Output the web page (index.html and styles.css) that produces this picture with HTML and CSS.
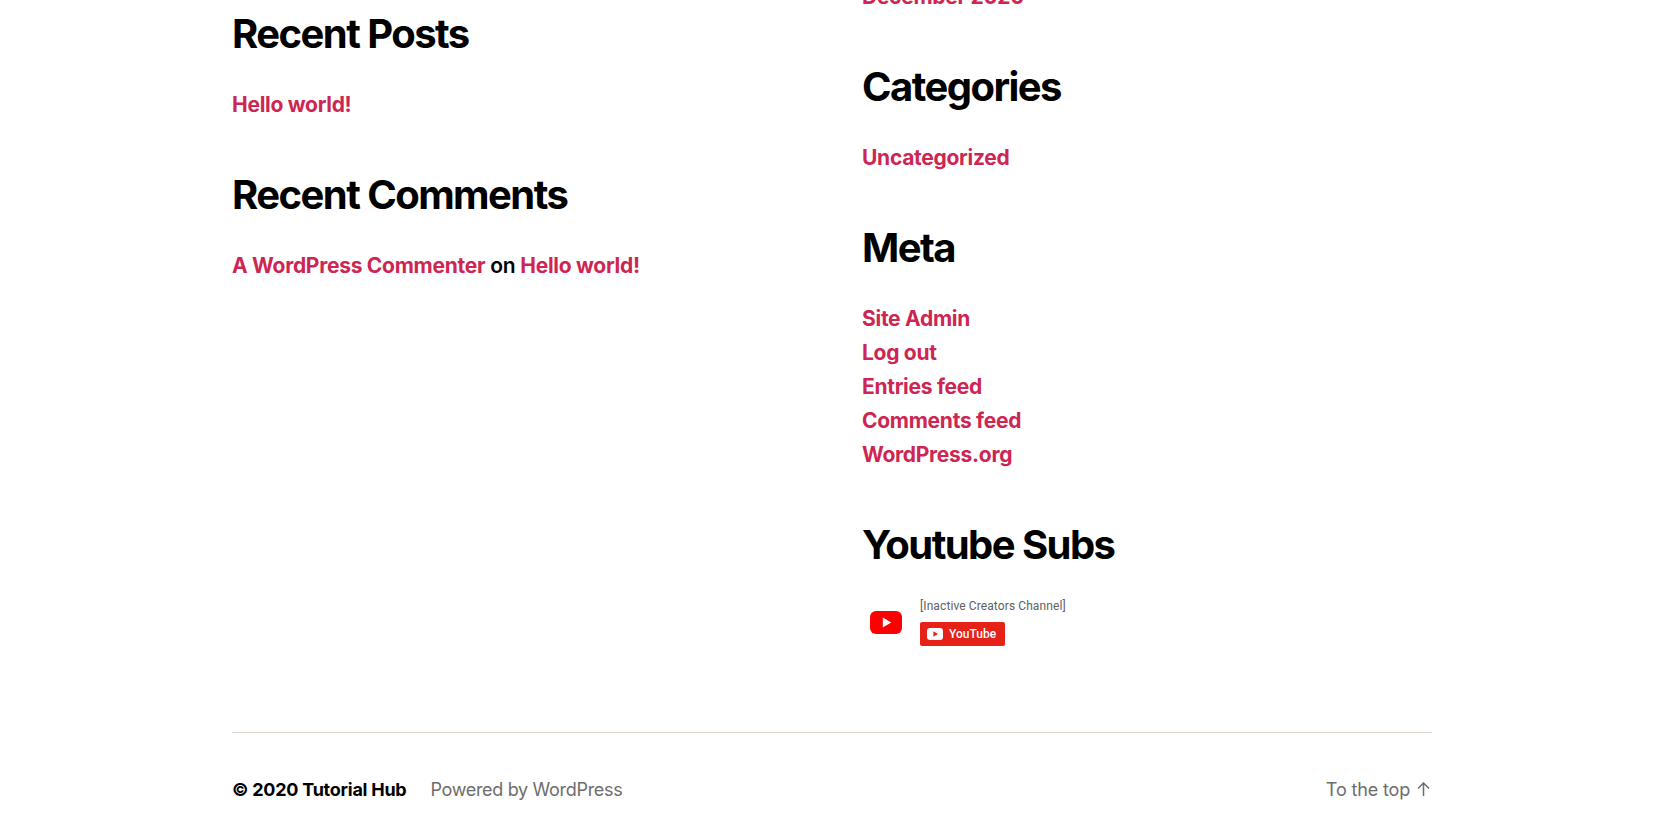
FILE: index.html
```html
<!DOCTYPE html>
<html>
  <head>
    <meta http-equiv="Content-Type" content="text/html; charset=UTF-8" />
    <meta name="viewport" content="width=device-width, initial-scale=1" />
    <title>Tutorial Hub</title>
    <link rel="stylesheet" href="styles.css">
  </head>
  <body>
    <div class="footer-inner">
      <div class="widgets">
        <div class="widget-col">
          <div class="widget">
            <h2 class="widget-title">Recent Posts</h2>
            <ul class="widget-list">
              <li><a href="#">Hello world!</a></li>
            </ul>
          </div>
          <div class="widget">
            <h2 class="widget-title">Recent Comments</h2>
            <ul class="widget-list">
              <li><a href="#">A WordPress Commenter</a> on <a href="#">Hello world!</a></li>
            </ul>
          </div>
        </div>
        <div class="widget-col widget-col-right">
          <div class="widget">
            <ul class="widget-list">
              <li><a href="#">December 2020</a></li>
            </ul>
          </div>
          <div class="widget">
            <h2 class="widget-title">Categories</h2>
            <ul class="widget-list">
              <li><a href="#">Uncategorized</a></li>
            </ul>
          </div>
          <div class="widget">
            <h2 class="widget-title">Meta</h2>
            <ul class="widget-list">
              <li><a href="#">Site Admin</a></li>
              <li><a href="#">Log out</a></li>
              <li><a href="#">Entries feed</a></li>
              <li><a href="#">Comments feed</a></li>
              <li><a href="#">WordPress.org</a></li>
            </ul>
          </div>
          <div class="widget">
            <h2 class="widget-title">Youtube Subs</h2>
            <div class="yt-box">
              <svg class="yt-logo" viewBox="0 0 32 23" width="32" height="23">
                <rect width="32" height="23" rx="6" fill="#f00" />
                <polygon points="12.8,6.6 12.8,16.4 21.2,11.5" fill="#fff" />
              </svg>
              <div class="yt-info">
                <div class="yt-name">[Inactive Creators Channel]</div>
                <a class="yt-button" href="#">
                  <svg viewBox="0 0 16 12" width="16" height="12">
                    <rect width="16" height="12" rx="3" fill="#fff" />
                    <polygon points="6.4,3.2 6.4,8.8 11,6" fill="#e62117" />
                  </svg>
                  YouTube
                </a>
              </div>
            </div>
          </div>
        </div>
      </div>
      <div class="credits">
        <div class="credits-left">
          <span class="copyright">© 2020 <a href="#">Tutorial Hub</a></span>
          <a class="powered" href="#">Powered by WordPress</a>
        </div>
        <a class="to-top" href="#">To the top
          <svg class="arrow" viewBox="0 0 13 14" width="13" height="14">
            <path d="M6.5 14V1M1 6.5L6.5 1L12 6.5" fill="none" stroke="#6d6d6d" stroke-width="1.5" />
          </svg>
        </a>
      </div>
    </div>
  </body>
</html>
```

FILE: styles.css
```css
html, body {
  height: 840px;
  overflow: hidden;
}
body {
  font-family: 'Inter', sans-serif;
  background-color: #ffffff;
  color: #000000;
  margin: 0;
  padding: 0;
}
.footer-inner {
  width: 1200px;
  margin-left: 232px;
}
.widgets {
  display: flex;
  gap: 60px;
  height: 732px;
  border-bottom: 1px solid #dcd7ca;
}
.widget-col {
  width: 570px;
  padding-top: 9px;
}
.widget-col-right {
  margin-top: -29px;
}
.widget {
  margin-bottom: 48px;
}
.widget-title {
  font-size: 40px;
  font-weight: 700;
  line-height: 50px;
  letter-spacing: -1.55px;
  margin: 0 0 29px 0;
}
.widget-list {
  list-style: none;
  margin: 0;
  padding: 0;
  font-size: 21px;
  font-weight: 600;
  line-height: 34px;
  letter-spacing: -0.28px;
}
.widget-list a {
  color: #cd2653;
  font-weight: 700;
  text-decoration: none;
}
.yt-box {
  display: flex;
  align-items: center;
  gap: 18px;
  margin-top: -1px;
  padding: 0 0 0 8px;
}
.yt-name {
  font-family: 'Roboto', sans-serif;
  font-size: 12px;
  line-height: 16px;
  letter-spacing: 0.1px;
  color: #606060;
  margin-bottom: 8px;
}
.yt-button {
  display: inline-flex;
  align-items: center;
  gap: 6px;
  height: 24px;
  padding: 0 9px 0 7px;
  background-color: #e62117;
  border-radius: 2px;
  color: #ffffff;
  font-family: 'Roboto', sans-serif;
  font-size: 12px;
  font-weight: 500;
  text-decoration: none;
}
.credits {
  display: flex;
  justify-content: space-between;
  align-items: center;
  height: 112px;
  font-size: 18px;
}
.credits-left {
  display: flex;
  gap: 24px;
}
.copyright {
  font-weight: 700;
  letter-spacing: -0.25px;
}
.copyright a {
  color: #000000;
  text-decoration: none;
}
.powered, .to-top {
  color: #6d6d6d;
  text-decoration: none;
}
.powered {
  letter-spacing: -0.32px;
}
.to-top {
  display: flex;
  align-items: center;
  gap: 7px;
  padding-right: 2px;
  letter-spacing: -0.15px;
}
```
